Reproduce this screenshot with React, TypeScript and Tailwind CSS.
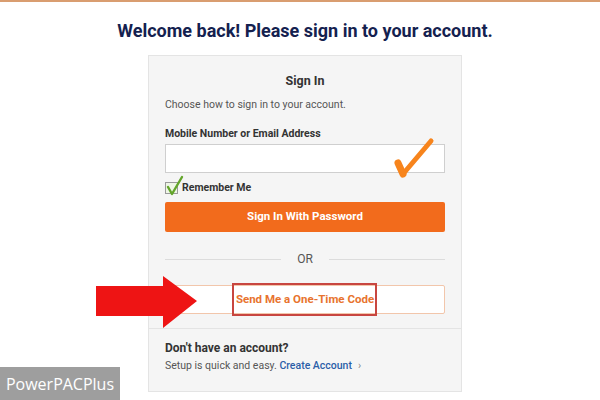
import React from 'react';

const RedArrow: React.FC = () => (
  <svg className="absolute left-[95px] top-[273px]" width="104" height="54" viewBox="0 0 104 54">
    <polygon points="1,11 68,11 68,1 102,26 68,53 68,41 1,41" fill="#ee1414" />
  </svg>
);

const OrangeCheck: React.FC = () => (
  <svg className="absolute left-[392px] top-[134px]" width="44" height="44" viewBox="0 0 44 44">
    <path d="M6 27 L11 38 L39 5" stroke="#f7841c" strokeWidth="5" fill="none" strokeLinecap="round" strokeLinejoin="round" />
    <path d="M6 27 L11 38" stroke="#f7841c" strokeWidth="7" fill="none" strokeLinecap="round" />
  </svg>
);

const GreenCheck: React.FC = () => (
  <svg className="absolute left-[-1px] top-[-8px]" width="20" height="22" viewBox="0 0 20 22">
    <path d="M3 12 L7 19 L17 2" stroke="#63a52a" strokeWidth="2.4" fill="none" strokeLinecap="round" strokeLinejoin="round" />
  </svg>
);

const App: React.FC = () => {
  return (
    <div className="relative w-[600px] h-[400px] overflow-hidden bg-white border-t-2 border-[#d99d70] font-['Roboto','Liberation_Sans',sans-serif]">
      <h1 className="mt-[17px] pl-[10px] text-center text-[18px] leading-[24px] font-bold text-[#14214f]">
        Welcome back! Please sign in to your account.
      </h1>

      <div className="ml-[148px] mt-[12px] w-[314px] bg-[#f5f5f5] border border-[#e4e4e4]">
        <div className="px-[16px] pt-[17px] pb-[14px]">
          <h2 className="text-center text-[12.5px] leading-[16px] font-bold text-[#333]">Sign In</h2>
          <p className="mt-[9px] text-[10.5px] leading-[14px] text-[#555]">Choose how to sign in to your account.</p>
          <label className="block mt-[15px] text-[10.5px] leading-[14px] font-bold text-[#333]">Mobile Number or Email Address</label>
          <div className="mt-[3px] h-[29px] bg-white border border-[#cfcfcf]" />

          <div className="mt-[8px] flex items-center gap-[4px] h-[14px]">
            <div className="relative w-[13px] h-[12px] border border-[#9a9a9a] bg-[#eef6e6]">
              <GreenCheck />
            </div>
            <span className="text-[10.5px] leading-[14px] font-bold text-[#333]">Remember Me</span>
          </div>

          <button className="mt-[7px] w-full h-[30px] rounded-[2px] bg-[#f26b1c] text-white text-[11.5px] font-bold">
            Sign In With Password
          </button>

          <div className="mt-[19px] flex items-center h-[16px]">
            <div className="flex-1 h-px bg-[#dcdcdc]" />
            <span className="px-[16px] text-[12px] text-[#555]">OR</span>
            <div className="flex-1 h-px bg-[#dcdcdc]" />
          </div>

          <div className="relative mt-[18px] h-[29px] bg-white border border-[#f2c6ab] rounded-[2px] flex items-center justify-center">
            <span className="text-[11.5px] font-bold text-[#e8732e]">Send Me a One-Time Code</span>
            <div className="absolute left-[66px] top-[-3px] w-[145px] h-[33px] border-2 border-[#c84640]" />
          </div>
        </div>

        <div className="border-t border-[#e4e4e4] px-[16px] pt-[11px] pb-[18px]">
          <p className="text-[12px] leading-[16px] font-bold text-[#333]">Don't have an account?</p>
          <p className="mt-[3px] text-[10.5px] leading-[14px] text-[#555]">
            Setup is quick and easy. <span className="font-medium text-[#2b5ea8]">Create Account</span>
            <span className="ml-[6px] text-[#888]">›</span>
          </p>
        </div>
      </div>

      <OrangeCheck />
      <RedArrow />

      <div className="absolute left-0 bottom-0 w-[120px] h-[33px] bg-[#9e9e9e] flex items-center justify-center font-['Open_Sans',sans-serif] text-[16px] text-white">
        PowerPACPlus
      </div>
    </div>
  );
};

export default App;
